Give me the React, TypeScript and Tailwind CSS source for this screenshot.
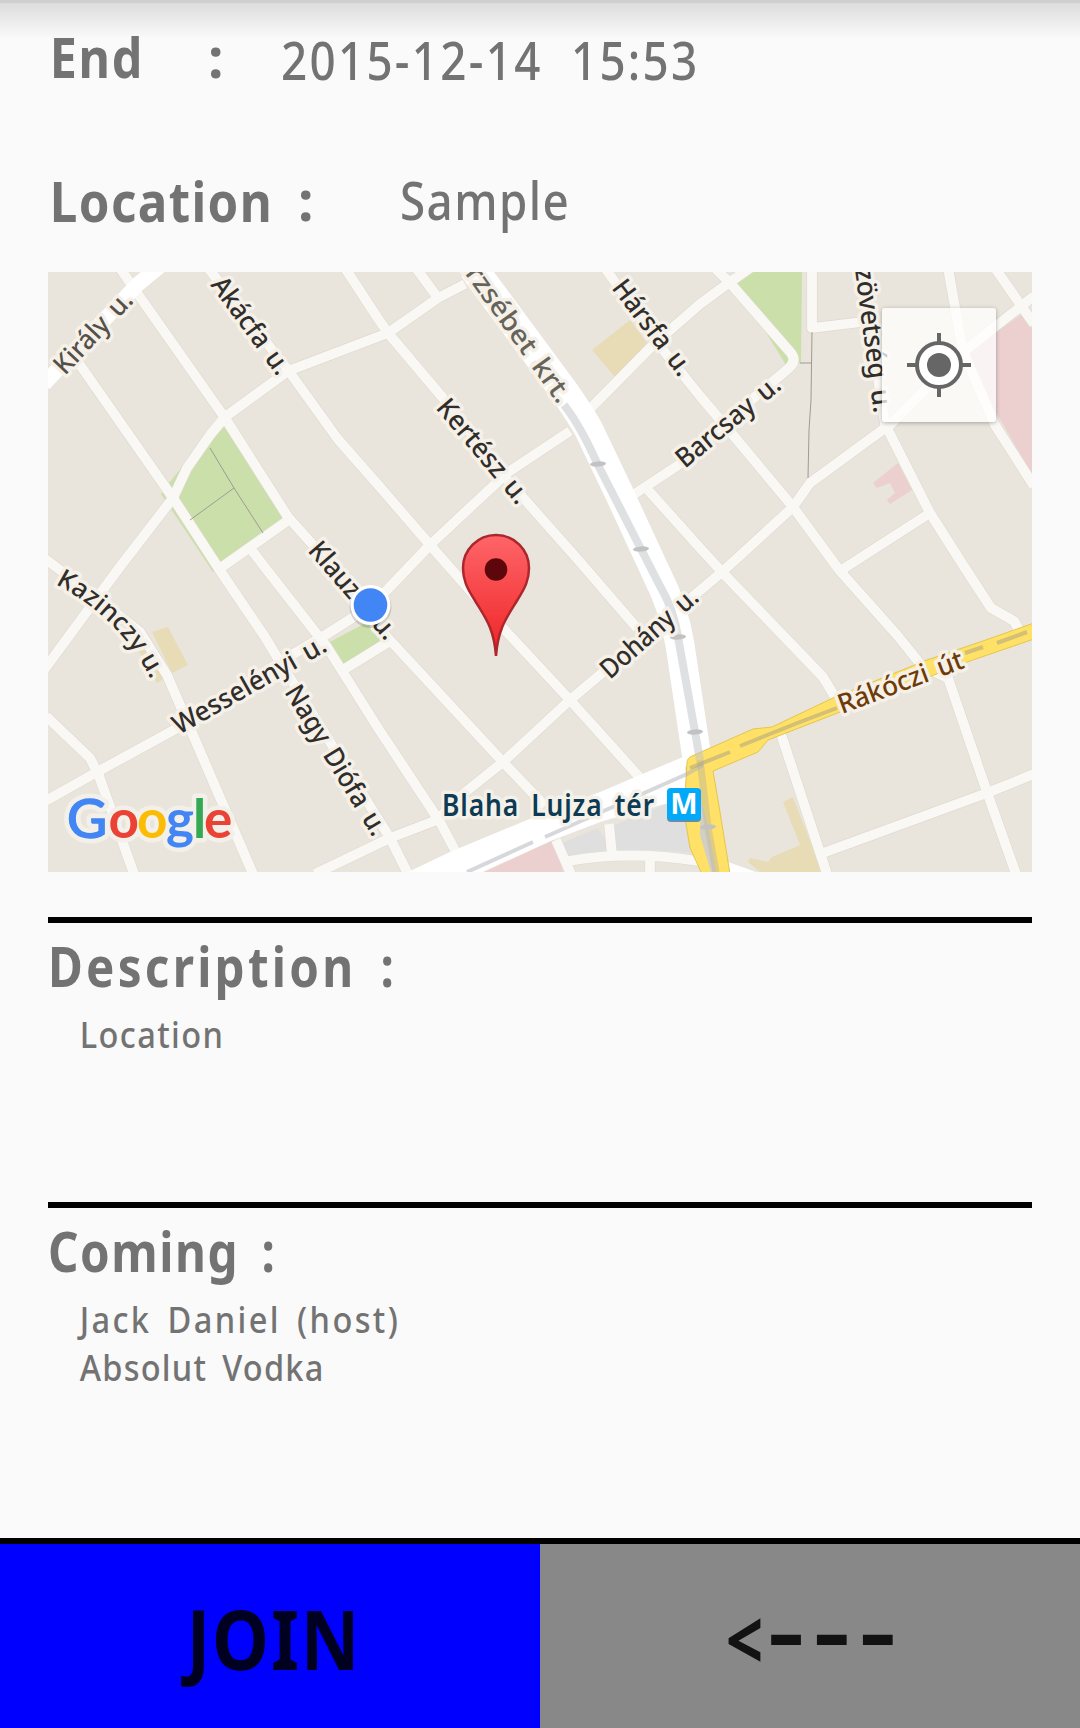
import React from "react";

const MINOR_ROADS = [
  "M120 268 L135 290 L225 418 L288 517 L313 545 L387 637 L503 762 L545 806",
  "M78 362 L173 498 L223 575 L265 637 L280 662 L390 838 L408 874",
  "M250 548 L263 565 L327 647 L378 728 L440 822 L457 854",
  "M222 567 L290 519",
  "M208 268 L288 370 L337 438 L350 453 L380 487 L430 545 L503 628 L570 700 L642 780",
  "M345 268 L377 317 L388 333 L443 398 L503 475 L580 562 L637 628",
  "M44 670 L119 568 L173 498 L187 468 L210 435 L225 417 L288 371 L388 333 L438 298 L465 284",
  "M416 268 L438 298",
  "M570 431 L507 473 L430 545 L387 590 L368 608 L327 634 L280 662 L183 725 L97 772 L44 802",
  "M343 670 L390 641",
  "M885 428 L810 483 L793 507 L722 572 L570 700 L503 762 L463 794 L437 820 L390 838 L315 874",
  "M605 268 L663 350 L700 396 L733 435 L793 507 L840 571 L897 635 L922 666 L948 678 L987 792 L1016 874",
  "M585 414 L653 345 L700 304 L730 282 L750 268",
  "M715 268 L730 283 L791 353 Q797 361 789 368 L757 395 L680 464 L633 495",
  "M648 490 L700 548 L722 572 L823 677 L838 702",
  "M812 268 L812 328 L862 322",
  "M861 268 L885 424 L930 513 L963 565 L991 608 L1014 621 L1019 630",
  "M840 571 L930 513",
  "M948 268 L963 352 L995 425 L1034 486",
  "M887 428 L963 352 L1034 296",
  "M995 268 L1022 307 L1034 324",
  "M781 734 L827 874",
  "M823 853 L987 793 L1034 774",
  "M46 716 L90 758 L99 776 L134 874",
  "M44 558 L100 600 L140 632 L167 675 L193 735 L253 874",
  "M556 840 L571 874",
  "M568 861 Q630 850 698 861",
  "M609 824 L612 855",
  "M650 858 L650 874",
];

type Label = { text: string; x: number; y: number; angle: number; length: number; fill?: string };

const STREET_LABELS: Label[] = [
  { text: "Király u.", x: 65, y: 376, angle: -47, length: 102, fill: "#55504a" },
  { text: "Akácfa u.", x: 210, y: 285, angle: 53.7, length: 114 },
  { text: "Erzsébet krt.", x: 455, y: 260, angle: 54.5, length: 178, fill: "#66635b" },
  { text: "Hársfa u.", x: 611, y: 288, angle: 52.7, length: 113 },
  { text: "Kertész u.", x: 435, y: 408, angle: 49.9, length: 128 },
  { text: "Barcsay u.", x: 685, y: 469, angle: -39.7, length: 127 },
  { text: "Szövetség u.", x: 853, y: 255, angle: 82.5, length: 160 },
  { text: "Klauzál u.", x: 307, y: 551, angle: 49, length: 120 },
  { text: "Wesselényi u.", x: 179, y: 735, angle: -29.5, length: 172 },
  { text: "Nagy Diófa u.", x: 284, y: 692, angle: 58.6, length: 171 },
  { text: "Dohány u.", x: 610, y: 680, angle: -41.6, length: 121 },
  { text: "Rákóczi út", x: 842, y: 714, angle: -20.6, length: 132, fill: "#6f3a08" },
];

const TRAM_STOPS = [
  [598, 464],
  [641, 549],
  [678, 637],
  [695, 732],
  [708, 827],
];

const GOOGLE = [
  { c: "o", x: 108.5, fill: "#ea4335" },
  { c: "o", x: 137, fill: "#fbbc05" },
  { c: "g", x: 166, fill: "#4285f4" },
  { c: "l", x: 193, fill: "#34a853" },
  { c: "e", x: 204, fill: "#ea4335" },
];

function MapDrawing() {
  return (
    <svg viewBox="48 272 984 600" className="block h-full w-full font-['Noto_Sans',sans-serif]">
      <defs>
        <linearGradient id="pin" x1="0" y1="0" x2="0" y2="1">
          <stop offset="0" stopColor="#ff6569" />
          <stop offset="1" stopColor="#ee2426" />
        </linearGradient>
        <path id="kazinczy" d="M55 584 Q124 620 154 686" />
      </defs>
      <rect x="48" y="272" width="984" height="600" fill="#e9e5dc" />

      <g fill="#cadfaa">
        <path d="M225 420 L290 517 L222 567 L213 572 L161 494 L169 483 L192 455Z" />
        <path d="M735 282 L749 272 L802 272 L801 363 L786 365Z" />
        <path d="M328 643 L375 618 L382 642 L343 666Z" />
      </g>
      <g fill="#e8dcb7">
        <path d="M630 320 L647 343 L615 377 L592 350Z" />
        <path d="M152 632 L168 627 L188 665 L172 673Z M137 648 L150 645 L165 678 L157 683Z" />
        <path d="M783 802 L793 797 L822 872 L760 872 L748 862 L750 858 L768 862 L772 857 L800 845Z" />
      </g>
      <g fill="#ebd0cf">
        <path d="M1022 314 L1032 328 L1032 474 L963 356Z" />
        <path d="M898 463 L912 490 L890 504 L887 500 L895 493 L890 483 L877 488 L873 483Z" />
        <path d="M480 874 L553 840 L564 874Z" />
      </g>
      <g fill="#dfdfdf">
        <path d="M562 843 L597 828 L608 842 L608 852 L570 858Z" />
        <path d="M615 825 L687 796 L696 853 L650 850 L615 852Z" />
      </g>

      <g fill="none" stroke="#dedacf" strokeWidth="11" strokeLinejoin="round">
        {MINOR_ROADS.map((d) => (
          <path key={d} d={d} />
        ))}
      </g>
      <g fill="none" stroke="#faf8f4" strokeWidth="9.8" strokeLinejoin="round">
        {MINOR_ROADS.map((d) => (
          <path key={d} d={d} />
        ))}
      </g>
      <g fill="none" stroke="#a09b90" strokeWidth="1">
        <path d="M210 448 L234 488 L263 533 M190 520 L234 488" />
        <path d="M812 332 L811 400 L809 430 L808 478 M800 363 L812 363" />
      </g>

      <path d="M44 384 L73 353 L137 285 L160 266" fill="none" stroke="#fff" strokeWidth="15" />
      <path d="M473 268 L566 394 Q582 417 589 430 L620 495 L657 575 Q674 608 680 645 L698 765" fill="none" stroke="#fff" strokeWidth="29" />
      <path d="M683 757 L640 775 L600 792 L527 820 L450 852 L404 874 L478 874 L553 840 L603 821 L690 797Z" fill="#fff" />
      <path d="M728 862 L756 872 L728 872Z" fill="#fff" />

      <path
        d="M687 763 Q687 758 692 756 L753 729 L772 727 L833 698 L927 660 L980 642 L1034 623 L1034 639 L967 662 L840 712 L768 740 L758 752 L713 771 L720 812 L730 874 L702 874 L690 848 L684 812Z"
        fill="#ffe168"
        stroke="#e3c64e"
        strokeWidth="1"
      />
      <path d="M701 800 L708 826 L716 872 L711 872 L700 835Z" fill="#d2cfc6" />

      <g fill="none" strokeOpacity="0.5">
        <path d="M533 362 L548 382" stroke="#c4c6cc" strokeWidth="6" />
        <path d="M564 405 Q580 425 597 463 L641 549 L660 586 Q674 610 678 637 L695 732 L700 760" stroke="#c0c1c5" strokeWidth="8" />
        <path d="M700 760 L708 827 L716 872" stroke="#c0b898" strokeWidth="7" />
        <path d="M467 872 L533 842 M545 837 L687 774 L703 765" stroke="#b0b2b8" strokeWidth="4" />
        <path d="M690 768 L730 752 M740 746 L800 722 L837 708 M965 653 L983 647 M997 643 L1027 632" stroke="#a89f80" strokeWidth="4" />
      </g>
      {TRAM_STOPS.map(([x, y]) => (
        <ellipse key={y} cx={x} cy={y} rx="8" ry="2.6" fill="#c2c2c3" transform={`rotate(-4 ${x} ${y})`} />
      ))}

      <g
        fontSize="27"
        fontWeight="500"
        stroke="#f5f1e9"
        strokeWidth="7"
        strokeLinejoin="round"
        className="[paint-order:stroke]"
      >
        {STREET_LABELS.map((l) => (
          <text
            key={l.text}
            fill={l.fill ?? "#302d2a"}
            transform={`translate(${l.x} ${l.y}) rotate(${l.angle})`}
            textLength={l.length}
            lengthAdjust="spacingAndGlyphs"
            className="[word-spacing:4px]"
          >
            {l.text}
          </text>
        ))}
        <text fill="#302d2a" fontSize="26">
          <textPath href="#kazinczy" textLength="138" lengthAdjust="spacingAndGlyphs">
            Kazinczy u.
          </textPath>
        </text>
        <text
          x="442"
          y="816"
          fontSize="30"
          fill="#0d3b54"
          fontWeight="600"
          textLength="213"
          lengthAdjust="spacingAndGlyphs"
          className="tracking-[1px] [word-spacing:5px]"
        >
          Blaha Lujza tér
        </text>
      </g>

      <rect x="667" y="789" width="34" height="33" rx="4" fill="#5f8fae" />
      <rect x="667" y="788" width="34" height="32" rx="4" fill="#03a9f9" />
      <text x="684" y="814" textAnchor="middle" fontSize="29" fontWeight="700" fill="#fff">
        M
      </text>

      <circle cx="370.5" cy="607" r="21" fill="#000" opacity="0.14" />
      <circle cx="370.5" cy="605" r="20" fill="#fff" />
      <circle cx="370.5" cy="605" r="16.8" fill="#4285f4" />

      <path
        d="M496 656 C494 627 484 616 474 599 C467 588 463 580 463 568 A33 33 0 0 1 529 568 C529 580 525 588 518 599 C508 616 498 627 496 656Z"
        fill="url(#pin)"
        stroke="#ac262b"
        strokeWidth="2.5"
      />
      <circle cx="496" cy="569.5" r="11.3" fill="#5d070c" />

      <g
        fontSize="53"
        className="font-['Lato',sans-serif] [paint-order:stroke]"
        fontWeight="700"
        stroke="#f3f0ea"
        strokeWidth="9"
        strokeLinejoin="round"
      >
        <text x="67" y="837.5" fontSize="55" fontWeight="400" fill="none" strokeWidth="11">
          G
        </text>
        {GOOGLE.map((g) => (
          <text key={g.x} x={g.x} y="838" fill="none">
            {g.c}
          </text>
        ))}
        <text x="67" y="837.5" fontSize="55" fontWeight="400" fill="#4285f4" stroke="#4285f4" strokeWidth="1.6" strokeLinejoin="miter">
          G
        </text>
        {GOOGLE.map((g) => (
          <text key={g.x} x={g.x} y="838" fill={g.fill} stroke="none">
            {g.c}
          </text>
        ))}
      </g>
    </svg>
  );
}

function LocateButton() {
  return (
    <button className="absolute top-9 right-9 flex h-[114px] w-[114px] items-center justify-center rounded-[3px] bg-white/75 shadow-[0_1px_4px_rgba(0,0,0,0.3)]">
      <svg viewBox="-32 -32 64 64" className="h-16 w-16" fill="none" stroke="#666" strokeWidth="4">
        <circle r="22" fill="#fff" />
        <circle r="12" fill="#666" stroke="none" />
        <path d="M0 -32V-22M0 22V32M-32 0H-22M22 0H32" />
      </svg>
    </button>
  );
}

function Heading({ children, className }: { children: React.ReactNode; className: string }) {
  return (
    <h2 className={`h-16 origin-left scale-x-[0.85] text-[56px] leading-16 font-bold whitespace-pre [word-spacing:10px] ${className}`}>
      {children}
    </h2>
  );
}

function Line({ children, className }: { children: React.ReactNode; className: string }) {
  return (
    <p className={`h-12 origin-left scale-x-[0.88] pl-9 text-[37px] leading-12 font-medium whitespace-pre ${className}`}>{children}</p>
  );
}

export default function App() {
  return (
    <main className="flex h-[1728px] w-[1080px] flex-col overflow-hidden bg-[#fafafa] font-['Noto_Sans',sans-serif] text-[#737373]">
      <div className="h-[3px] shrink-0 bg-[#cfcfcf]" />
      <div className="flex h-[1535px] shrink-0 flex-col bg-linear-to-b from-[#dddddd] to-[#fafafa] to-[36px] px-12">
        <div className="flex h-[109px] items-center text-[52px] whitespace-pre">
          <b className="w-[160px] origin-left scale-x-[0.88] pl-0.5 text-[55px] tracking-[2px]">End</b>
          <b className="w-[73px] text-[55px]">:</b>
          <span className="origin-left scale-x-[0.88] pt-1 font-medium tracking-[2.6px] [word-spacing:16px]">2015-12-14 15:53</span>
        </div>
        <div className="flex h-[160px] items-center pt-4 text-[52px] whitespace-pre">
          <b className="w-[250px] origin-left scale-x-[0.88] pl-0.5 text-[56px] tracking-[1.6px]">Location</b>
          <b className="w-[102px] text-[55px]">:</b>
          <span className="origin-left scale-x-[0.88] font-medium tracking-[1.6px]">Sample</span>
        </div>
        <section className="relative h-[600px] shrink-0">
          <MapDrawing />
          <LocateButton />
        </section>
        <section className="mt-[45px] h-[285px] shrink-0 border-t-6 border-black pt-[10px]">
          <Heading className="tracking-[3.8px]">Description :</Heading>
          <div className="pt-[13px]">
            <Line className="tracking-[1.6px]">Location</Line>
          </div>
        </section>
        <section className="shrink-0 border-t-6 border-black pt-[10px]">
          <Heading className="tracking-[1.8px]">Coming :</Heading>
          <div className="pt-[13px]">
            <Line className="tracking-[2.7px] [word-spacing:6px]">Jack Daniel (host)</Line>
            <Line className="tracking-[1.4px] [word-spacing:6px]">Absolut Vodka</Line>
          </div>
        </section>
      </div>
      <footer className="grid h-[190px] shrink-0 grid-cols-2 border-t-6 border-black text-[82px] leading-none font-bold text-black/87">
        <button className="flex items-center justify-center bg-[#0000ff] pt-1">
          <span className="scale-x-[0.88] pl-2 tracking-[2px]">JOIN</span>
        </button>
        <button className="flex items-center justify-center bg-[#888888] pt-1">
          <span className="scale-x-[0.8]">&lt;</span>
          <span className="origin-left scale-x-[1.38] pr-8 pb-4 tracking-[7px]">---</span>
        </button>
      </footer>
    </main>
  );
}
